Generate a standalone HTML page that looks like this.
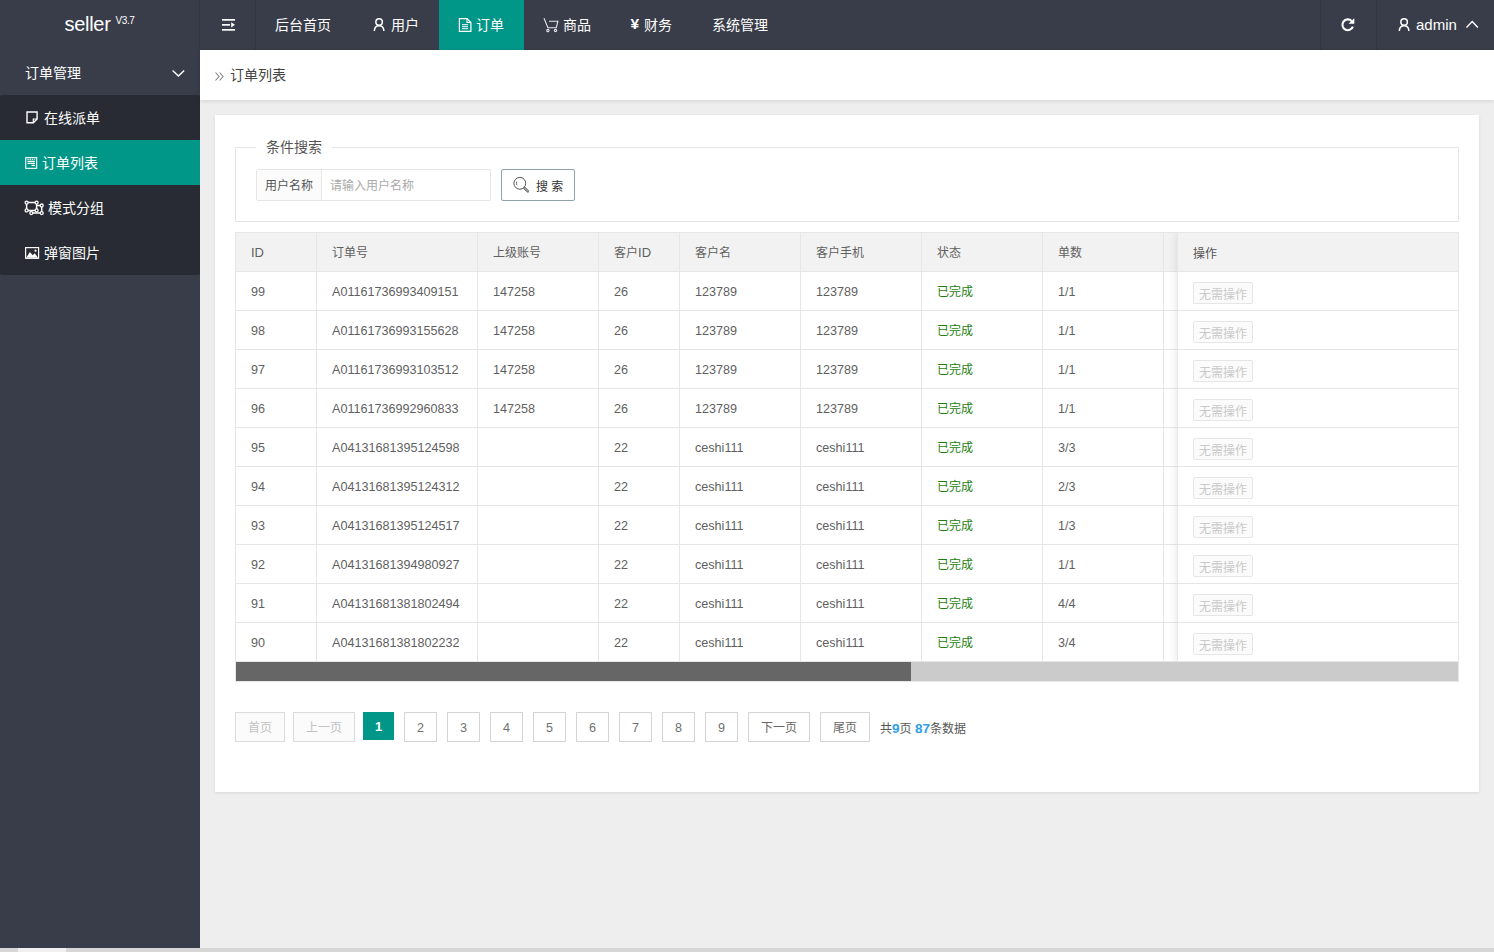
<!DOCTYPE html>
<html lang="zh-CN">
<head>
<meta charset="utf-8">
<title>订单列表</title>
<style>
*{box-sizing:border-box;margin:0;padding:0}
html,body{width:1494px;height:952px;overflow:hidden}
body{font-family:"Liberation Sans","Noto Sans CJK SC",sans-serif;font-size:14px;color:#333;background:#eeeeee;position:relative}
a{text-decoration:none;color:inherit}
ul{list-style:none}
svg{display:block;overflow:visible}
.ic{position:absolute}
.yen{position:absolute;left:19.5px;top:0px;font-size:15.5px;font-weight:bold}
/* header */
.header{position:absolute;left:0;top:0;width:1494px;height:50px;background:#393D49;color:#fff}
.logo{position:absolute;left:0;top:0;width:199px;height:50px;text-align:center;line-height:49px;font-size:20px;letter-spacing:-0.3px;color:#fff}
.logo sup{font-size:10px;letter-spacing:-0.4px;position:relative;top:-7px;vertical-align:baseline;margin-left:5px}
.toggle{position:absolute;left:199px;top:0;width:57px;height:50px;border-left:1px solid #33363f;border-right:1px solid #33363f}
.nav{position:absolute;left:255px;top:0;height:50px;display:flex}
.nav li{position:relative;height:50px;line-height:48px;padding:0 0 0 20px;font-size:14px;color:#fff;display:flex;align-items:center;white-space:nowrap}
.nav li.on{background:#009688}

.hright{position:absolute;right:0;top:0;height:50px;display:flex}
.hright .it{position:relative;height:50px;border-left:1px solid #33363f;display:flex;align-items:center;color:#fff;font-size:15px}
/* side */
.side{position:absolute;left:0;top:50px;width:200px;height:898px;background:#393D49;color:#fff}
.side .grp{height:45px;line-height:47px;padding-left:25px;font-size:14px;position:relative}
.side .sub{background:#282B33;border-radius:2px;overflow:hidden}
.side .sub li{position:relative;height:45px;line-height:47px;padding-left:25px;font-size:14px;color:#fff}
.side .sub li.on{background:#009688}

/* crumb */
.crumb{position:absolute;left:200px;top:50px;width:1294px;height:50px;background:#fff;box-shadow:0 1px 4px rgba(0,0,0,.12);line-height:50px;padding-left:15px;font-size:14px;color:#444;display:flex;align-items:center}
.card{position:absolute;left:215px;top:115px;width:1264px;height:677px;background:#fff;box-shadow:0 1px 3px rgba(0,0,0,.1)}
.fs{position:absolute;left:20px;top:32px;width:1224px;height:75px;border:1px solid #e6e6e6}
.fs .lg{position:absolute;left:20px;top:-11px;background:#fff;padding:0 10px;font-size:14px;line-height:20px;color:#555}
.ig{position:absolute;left:20px;top:21px;width:235px;height:32px;border:1px solid #e6e6e6;border-radius:2px;display:flex;font-size:12px}
.ig .lb{width:65px;background:#FBFBFB;border-right:1px solid #e6e6e6;line-height:32px;text-align:center;color:#555}
.ig .ph{line-height:32px;padding-left:8px;color:#aaa}
.sbtn{position:absolute;left:265px;top:21px;width:74px;height:32px;border:1px solid #8fa3a8;border-radius:2px;background:#fff;display:flex;align-items:center;font-size:12px;color:#333;padding-left:11px}
.sbtn svg{margin-right:7px}
/* table */
.tb{position:absolute;left:20px;top:117px;width:1224px;height:450px;border:1px solid #e6e6e6;overflow:hidden}
table{border-collapse:separate;border-spacing:0;table-layout:fixed;font-size:12px;color:#5f5f5f;width:1049px}
td,th{height:39px;border-right:1px solid #e6e6e6;border-bottom:1px solid #e6e6e6;padding:0 15px;text-align:left;font-weight:normal;white-space:nowrap;overflow:hidden;line-height:36px;padding-top:2px}
td{font-size:12.6px}
th{background:#f2f2f2}
th i{font-style:normal;font-size:13px}
td.ok{color:#1e7e0f;font-size:12px}
.fix{position:absolute;right:0;top:0;width:281px;background:#fff;box-shadow:-1px 0 8px rgba(0,0,0,.09)}
.fix div{height:39px;border-bottom:1px solid #e6e6e6;border-left:1px solid #e6e6e6;padding:0 15px;display:flex;align-items:center;font-size:12px;color:#555}
.fix div.h{background:#f2f2f2;padding-top:1px}
.nb{display:inline-block;height:22px;line-height:24px;overflow:hidden;padding:0 5px;border:1px solid #e6e6e6;border-radius:2px;background:#FBFBFB;color:#c9c9c9;font-size:12px;position:relative;top:2px}
.sbar{position:absolute;left:0;top:429px;width:1222px;height:19px;background:#cbcbcb}
.sbar i{display:block;width:675px;height:19px;background:#666}
/* pager */
.pg{position:absolute;left:20px;top:597px;height:30px;display:flex;align-items:flex-start;font-size:12px}
.pg a,.pg span.c{display:block;height:30px;line-height:30px;overflow:hidden;border:1px solid #d4d4d4;margin-right:8px;text-align:center;color:#666;background:#fff}
.pg .d{color:#c2c2c2;background:#FBFBFB;border-color:#dcdcdc}
.pg .n{width:33px;margin-right:10px;font-size:12.6px;color:#707070}
.pg span.c{background:#009688;border-color:#009688;color:#fff;width:31px;height:28px;line-height:28px;margin-right:10px;font-weight:bold;font-size:13px}
.pg .t{color:#555;margin-left:2px;line-height:34px}
.pg .t b{color:#2d9ee8;font-size:13.5px}
.bot{position:absolute;left:0;top:948px;width:1494px;height:4px;background:#d7d7d7}
.bot i{position:absolute;left:18px;top:0;width:48px;height:4px;background:#f0f0f0}
</style>
</head>
<body>
<div class="header">
  <div class="logo">seller<sup>V3.7</sup></div>
  <div class="toggle">
    <svg width="56" height="50" viewBox="0 0 56 50" style="position:absolute;left:0;top:0"><g fill="#fff"><rect x="22" y="19" width="13" height="1.700"/><rect x="22" y="24" width="8" height="1.700"/><rect x="22" y="29" width="13" height="1.700"/><path d="M31.200 22.300l3.800 2.550-3.800 2.550z"/></g></svg>
  </div>
  <ul class="nav">
    <li style="width:97px">后台首页</li>
    <li style="width:87px;padding-left:39px"><svg class="ic" width="14" height="14" viewBox="0 0 14 14" style="left:20px;top:18px"><g fill="none" stroke="#fff" stroke-width="1.500"><circle cx="7.100" cy="4.100" r="3.250"/><path d="M2.300 13c.2-3.300 2.100-5.200 4.800-5.200s4.600 1.900 4.800 5.200"/></g></svg>用户</li>
    <li class="on" style="width:85px;padding-left:37px"><svg class="ic" width="14" height="14" viewBox="0 0 14 14" style="left:20px;top:18px"><g fill="none" stroke="#fff"><path d="M0.400 0.600h7.600l3.900 3.900v8.800h-11.500z" stroke-width="1.200"/><path d="M8 0.600v3.900h3.900" stroke-width="1.100"/><path d="M3 6.700h6M3 8.700h6M3 10.700h6" stroke-width="1"/></g></svg>订单</li>
    <li style="width:87px;padding-left:39px"><svg class="ic" width="15" height="14" viewBox="0 0 15 14" style="left:20px;top:18px"><g fill="none" stroke="#e4e6ea" stroke-width="1.100"><path d="M0 0.300l3.900 9.400h8.400l1.600-6.500h-8.900"/><circle cx="3.900" cy="12.500" r="1.150"/><circle cx="11.500" cy="12.500" r="1.150"/></g></svg>商品</li>
    <li style="width:81px;padding-left:33px"><b class="yen">¥</b>财务</li>
    <li style="width:96px">系统管理</li>
  </ul>
  <div class="hright">
    <div class="it" style="width:56px">
      <svg class="ic" width="16" height="16" viewBox="0 0 16 16" style="left:20px;top:17px"><path d="M11.900 9.600A5.400 5.400 0 1 1 10.700 4" fill="none" stroke="#fff" stroke-width="2.100"/><path d="M13.300 1.200v5.500h-5.800z" fill="#fff"/></svg>
    </div>
    <div class="it" style="width:118px;padding-left:39px">
      <svg class="ic" width="14" height="14" viewBox="0 0 14 14" style="left:20px;top:18px"><g fill="none" stroke="#fff" stroke-width="1.500"><circle cx="7.100" cy="4.100" r="3.250"/><path d="M2.300 13c.2-3.300 2.100-5.200 4.800-5.200s4.600 1.900 4.800 5.200"/></g></svg><span style="position:relative;top:-1px">admin</span>
      <svg class="ic" width="14" height="8" viewBox="0 0 14 8" style="left:88px;top:20px"><path d="M1.500 7.400l5.700-5.900 5.700 5.900" fill="none" stroke="#fff" stroke-width="1.400"/></svg>
    </div>
  </div>
</div>

<div class="side">
  <div class="grp">订单管理
    <svg class="ic" width="14" height="8" viewBox="0 0 14 8" style="left:171px;top:19px"><path d="M1.600 1.400l5.800 5.600 5.800-5.600" fill="none" stroke="#fff" stroke-width="1.400"/></svg>
  </div>
  <ul class="sub">
    <li style="padding-left:44px"><svg class="ic" width="13" height="13" viewBox="0 0 13 13" style="left:26px;top:16px"><path d="M1 1h10.100v7l-3.800 3.800h-6.300z" fill="none" stroke="#fff" stroke-width="1.400"/><path d="M11.100 8h-3.800v3.800" fill="none" stroke="#fff" stroke-width="1.200"/></svg>在线派单</li>
    <li class="on" style="padding-left:42px"><svg class="ic" width="13" height="12" viewBox="0 0 13 12" style="left:25px;top:17px"><g fill="none" stroke="#fff" stroke-width="1.100"><rect x=".75" y=".65" width="10.900" height="10.700"/><path d="M2.500 2.400h7.400" stroke-dasharray="1.200 1"/><path d="M2.500 4.400h7.400M2.500 6.400h7.400M6.500 8.400h3.400"/></g></svg>订单列表</li>
    <li style="padding-left:48px"><svg class="ic" width="20" height="15" viewBox="0 0 20 15" style="left:24px;top:15px"><g fill="none" stroke="#fff" stroke-width="1.500"><path d="M2.600 2.600h10v7.800h-10zM12.600 5.500h5.100v7.600h-10.400v-2.700"/></g><g fill="#282B33" stroke="#fff" stroke-width="1.300"><circle cx="2.600" cy="2.600" r="1.500"/><circle cx="12.600" cy="2.600" r="1.500"/><circle cx="2.600" cy="10.400" r="1.500"/><circle cx="12.600" cy="10.400" r="1.500"/><circle cx="17.700" cy="5.500" r="1.500"/><circle cx="17.700" cy="13.100" r="1.500"/><circle cx="7.300" cy="13.100" r="1.500"/></g></svg>模式分组</li>
    <li style="padding-left:44px"><svg class="ic" width="15" height="12" viewBox="0 0 15 12" style="left:25px;top:17px"><rect x=".6" y=".6" width="13" height="10.700" fill="none" stroke="#fff" stroke-width="1.200"/><path d="M1.200 10.700l3.700-5.700 2.700 3.200 2.100-2 3.400 4.500z" fill="#fff"/><circle cx="10.500" cy="3.700" r="1.100" fill="#fff"/></svg>弹窗图片</li>
  </ul>
</div>

<div class="crumb"><svg width="9" height="9" viewBox="0 0 9 9" style="margin-right:6.500px;margin-left:-.5px;position:relative;top:1px"><path d="M.5 .5l3.500 4-3.500 4M4.600 .5l3.500 4-3.500 4" fill="none" stroke="#858585" stroke-width="1.100"/></svg>订单列表</div>

<div class="card">
  <div class="fs">
    <div class="lg">条件搜索</div>
    <div class="ig"><div class="lb">用户名称</div><div class="ph">请输入用户名称</div></div>
    <div class="sbtn"><svg width="16" height="16" viewBox="0 0 16 16"><g fill="none" stroke="#555"><circle cx="6.800" cy="6.300" r="5.900" stroke-width="1"/><path d="M11.300 10.800l3.600 3.600" stroke-width="2.400" stroke-linecap="round"/><path d="M11.300 10.800l3.600 3.600" stroke-width=".8" stroke="#fff" stroke-linecap="round"/><path d="M3.900 8.200a4 4 0 0 1 0-3.800" stroke="#5a6f8a" stroke-width="1"/></g></svg>搜 索</div>
  </div>
  <div class="tb">
    <table>
      <colgroup><col style="width:81px"><col style="width:161px"><col style="width:121px"><col style="width:81px"><col style="width:121px"><col style="width:121px"><col style="width:121px"><col style="width:121px"><col style="width:121px"></colgroup>
      <tr><th><i>ID</i></th><th>订单号</th><th>上级账号</th><th>客户<i>ID</i></th><th>客户名</th><th>客户手机</th><th>状态</th><th>单数</th><th></th></tr>
      <tr><td>99</td><td>A01161736993409151</td><td>147258</td><td>26</td><td>123789</td><td>123789</td><td class="ok">已完成</td><td>1/1</td><td></td></tr>
      <tr><td>98</td><td>A01161736993155628</td><td>147258</td><td>26</td><td>123789</td><td>123789</td><td class="ok">已完成</td><td>1/1</td><td></td></tr>
      <tr><td>97</td><td>A01161736993103512</td><td>147258</td><td>26</td><td>123789</td><td>123789</td><td class="ok">已完成</td><td>1/1</td><td></td></tr>
      <tr><td>96</td><td>A01161736992960833</td><td>147258</td><td>26</td><td>123789</td><td>123789</td><td class="ok">已完成</td><td>1/1</td><td></td></tr>
      <tr><td>95</td><td>A04131681395124598</td><td></td><td>22</td><td>ceshi111</td><td>ceshi111</td><td class="ok">已完成</td><td>3/3</td><td></td></tr>
      <tr><td>94</td><td>A04131681395124312</td><td></td><td>22</td><td>ceshi111</td><td>ceshi111</td><td class="ok">已完成</td><td>2/3</td><td></td></tr>
      <tr><td>93</td><td>A04131681395124517</td><td></td><td>22</td><td>ceshi111</td><td>ceshi111</td><td class="ok">已完成</td><td>1/3</td><td></td></tr>
      <tr><td>92</td><td>A04131681394980927</td><td></td><td>22</td><td>ceshi111</td><td>ceshi111</td><td class="ok">已完成</td><td>1/1</td><td></td></tr>
      <tr><td>91</td><td>A04131681381802494</td><td></td><td>22</td><td>ceshi111</td><td>ceshi111</td><td class="ok">已完成</td><td>4/4</td><td></td></tr>
      <tr><td>90</td><td>A04131681381802232</td><td></td><td>22</td><td>ceshi111</td><td>ceshi111</td><td class="ok">已完成</td><td>3/4</td><td></td></tr>
    </table>
    <div class="fix">
      <div class="h">操作</div>
      <div><span class="nb">无需操作</span></div><div><span class="nb">无需操作</span></div><div><span class="nb">无需操作</span></div><div><span class="nb">无需操作</span></div><div><span class="nb">无需操作</span></div><div><span class="nb">无需操作</span></div><div><span class="nb">无需操作</span></div><div><span class="nb">无需操作</span></div><div><span class="nb">无需操作</span></div><div><span class="nb">无需操作</span></div>
    </div>
    <div class="sbar"><i></i></div>
  </div>
  <div class="pg">
    <a class="d" style="width:50px">首页</a><a class="d" style="width:62px">上一页</a><span class="c">1</span><a class="n">2</a><a class="n">3</a><a class="n">4</a><a class="n">5</a><a class="n">6</a><a class="n">7</a><a class="n">8</a><a class="n">9</a><a style="width:62px;margin-right:10px">下一页</a><a style="width:50px">尾页</a><span class="t">共<b>9</b>页 <b>87</b>条数据</span>
  </div>
</div>
<div class="bot"><i></i></div>
</body>
</html>
